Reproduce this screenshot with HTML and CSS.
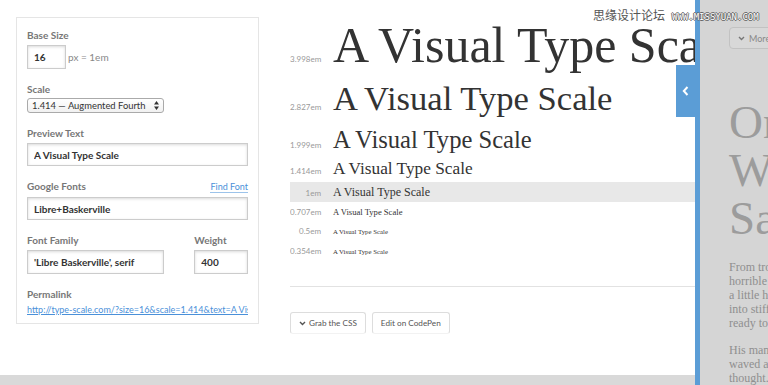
FILE: index.html
```html
<!DOCTYPE html>
<html lang="en">
<head>
    <meta charset="UTF-8">
    <meta name="viewport" content="width=device-width, initial-scale=1.0">
    <title>Type Scale</title>
    <link rel="stylesheet" href="styles.css">
</head>
<body>
    <div class="watermark">思缘设计论坛<span>WWW.MISSYUAN.COM</span></div>

    <div class="layout">
        <div class="page">
            <div class="content">
                <!-- Controls -->
                <aside class="controls">
                    <div class="field">
                        <label>Base Size</label>
                        <div class="inline">
                            <input class="input input-size" type="text" value="16">
                            <span class="unit">px = 1em</span>
                        </div>
                    </div>

                    <div class="field field-select">
                        <label>Scale</label>
                        <div class="select-wrap">
                            <select class="select">
                                <option>1.414 — Augmented Fourth</option>
                            </select>
                            <svg class="select-arrows" width="5" height="9" viewBox="0 0 5 9"><path d="M2.5 0L5 3.5H0z M2.5 9L0 5.5h5z" fill="#333"/></svg>
                        </div>
                    </div>

                    <div class="field">
                        <label>Preview Text</label>
                        <input class="input input-short" type="text" value="A Visual Type Scale">
                    </div>

                    <div class="field">
                        <label>Google Fonts <a class="find-font" href="#">Find Font</a></label>
                        <input class="input input-short" type="text" value="Libre+Baskerville">
                    </div>

                    <div class="field-row">
                        <div class="field family">
                            <label>Font Family</label>
                            <input class="input" type="text" value="'Libre Baskerville', serif">
                        </div>
                        <div class="field weight">
                            <label>Weight</label>
                            <input class="input" type="text" value="400">
                        </div>
                    </div>

                    <div class="field permalink">
                        <label>Permalink</label>
                        <a href="#">http://type-scale.com/?size=16&amp;scale=1.414&amp;text=A Visual Type Scale&amp;font=Libre+Baskerville</a>
                    </div>
                </aside>

                <!-- Scale preview -->
                <main class="scale">
                    <div class="row row-1"><span class="size">3.998em</span><span class="sample">A Visual Type Scale</span></div>
                    <div class="row row-2"><span class="size">2.827em</span><span class="sample">A Visual Type Scale</span></div>
                    <div class="row row-3"><span class="size">1.999em</span><span class="sample">A Visual Type Scale</span></div>
                    <div class="row row-4"><span class="size">1.414em</span><span class="sample">A Visual Type Scale</span></div>
                    <div class="row row-5 base"><span class="size">1em</span><span class="sample">A Visual Type Scale</span></div>
                    <div class="row row-6"><span class="size">0.707em</span><span class="sample">A Visual Type Scale</span></div>
                    <div class="row row-7"><span class="size">0.5em</span><span class="sample">A Visual Type Scale</span></div>
                    <div class="row row-8"><span class="size">0.354em</span><span class="sample">A Visual Type Scale</span></div>

                    <hr>

                    <div class="actions">
                        <button class="btn">
                            <svg width="7" height="5" viewBox="0 0 7 5"><path d="M1 1l2.5 2.5L6 1" fill="none" stroke="#555" stroke-width="1.4"/></svg>
                            Grab the CSS
                        </button>
                        <button class="btn">Edit on CodePen</button>
                    </div>
                </main>
            </div>
            <div class="band"></div>
        </div>

        <!-- Drawer -->
        <div class="drawer">
            <div class="drawer-tab">
                <svg width="7" height="10" viewBox="0 0 7 10"><path d="M5.5 1L1.8 5l3.7 4" fill="none" stroke="#fff" stroke-width="2"/></svg>
            </div>
            <div class="drawer-body">
                <button class="more">
                    <svg width="7" height="5" viewBox="0 0 7 5"><path d="M1 1l2.5 2.5L6 1" fill="none" stroke="#777" stroke-width="1.4"/></svg>
                    More
                </button>
                <h2>One Morning,<br>When Gregor<br>Samsa Woke</h2>
                <p>From troubled dreams, he found himself transformed in his bed into a<br>horrible vermin. He lay on his armour-like back, and if he lifted his head<br>a little he could see his brown belly, slightly domed and divided by arches<br>into stiff sections. The bedding was hardly able to cover it and seemed<br>ready to slide off any moment.</p>
                <p>His many legs, pitifully thin compared with the size of the rest of him,<br>waved about helplessly as he looked. "What's happened to me?" he<br>thought.</p>
            </div>
        </div>
    </div>
</body>
</html>
```

FILE: styles.css
```css
/* Global */
body {
    margin: 0;
    font-family: Lato, "Liberation Sans", sans-serif;
    background-color: #fff;
    color: #333;
    overflow: hidden;
}

.layout {
    display: flex;
    height: 385px;
}

/* Watermark */
.watermark {
    position: absolute;
    top: 6px;
    left: 593px;
    z-index: 10;
    font-family: "Noto Sans CJK SC", sans-serif;
    font-size: 12px;
    line-height: 18px;
    color: #555;
}

.watermark span {
    margin-left: 7px;
    font-family: "DejaVu Sans Mono", monospace;
    font-size: 9px;
    color: #fff;
    text-shadow: 1px 0 0 #666, -1px 0 0 #666, 0 1px 0 #666, 0 -1px 0 #666;
}

/* Page */
.page {
    flex: none;
    width: 695px;
    display: flex;
    flex-direction: column;
    overflow: hidden;
}

.content {
    flex: 1;
    display: flex;
    gap: 31px;
    padding: 17px 0 0 16px;
}

.band {
    height: 10px;
    background-color: #d9d9d9;
}

/* Controls card */
.controls {
    box-sizing: border-box;
    flex: none;
    width: 243px;
    height: 307px;
    padding: 11px 10px 0;
    border: 1px solid #e5e5e5;
}

.field {
    margin-bottom: 14px;
}

.field label {
    display: flex;
    justify-content: space-between;
    align-items: baseline;
    margin-bottom: 4px;
    font-size: 10px;
    font-weight: 700;
    line-height: 12px;
    color: #777;
}

.field-select label {
    margin-bottom: 3px;
}

.find-font {
    font-size: 9px;
    font-weight: 400;
    color: #4a90d9;
    text-decoration: none;
    border-bottom: 1px solid #9cc3ea;
    line-height: 10px;
}

.inline {
    display: flex;
    align-items: center;
    gap: 2px;
}

.unit {
    font-size: 10px;
    color: #888;
}

.input {
    box-sizing: border-box;
    display: block;
    width: 100%;
    height: 24px;
    padding: 0 6px;
    border: 1px solid #ccc;
    box-shadow: inset 0 1px 3px rgba(0, 0, 0, 0.15);
    font-family: Lato, sans-serif;
    font-size: 10px;
    font-weight: 700;
    color: #333;
    outline: none;
}

.input-short {
    height: 23px;
}

.input-size {
    width: 39px;
}

.select-wrap {
    position: relative;
    width: 137px;
}

.select {
    appearance: none;
    -webkit-appearance: none;
    box-sizing: border-box;
    display: block;
    width: 137px;
    height: 15px;
    padding: 0 4px;
    border: 1px solid #aaa;
    border-radius: 3px;
    background: linear-gradient(#fff, #f1f1f1);
    font-family: Lato, sans-serif;
    font-size: 9.4px;
    line-height: 13px;
    color: #333;
}

.select-arrows {
    position: absolute;
    right: 5px;
    top: 3px;
}

.field-row {
    display: flex;
    gap: 30px;
}

.family {
    width: 138px;
}

.weight {
    width: 54px;
}

.permalink a {
    display: block;
    overflow: hidden;
    white-space: nowrap;
    font-size: 9px;
    line-height: 12px;
    color: #4a90d9;
}

/* Scale preview */
.scale {
    flex: none;
    width: 405px;
}

.row {
    display: flex;
    align-items: baseline;
    overflow: hidden;
    white-space: nowrap;
}

.size {
    flex: none;
    width: 31px;
    margin-right: 12px;
    text-align: right;
    font-size: 8px;
    color: #999;
}

.sample {
    font-family: "Liberation Serif", serif;
    color: #333;
}

.row-1 { height: 64px; }
.row-1 .sample { font-size: 50px; line-height: 56px; }
.row-2 { height: 43px; }
.row-2 .sample { font-size: 34.6px; line-height: 35px; }
.row-3 { height: 32px; }
.row-3 .sample { font-size: 24.6px; line-height: 32px; }
.row-4 { height: 26px; }
.row-4 .sample { font-size: 17.3px; line-height: 26px; }
.row-5 { height: 20px; }
.row-5 .sample { font-size: 12px; line-height: 20px; }
.row-6 { height: 20px; }
.row-6 .sample { font-size: 8.6px; line-height: 20px; }
.row-7 { height: 20px; }
.row-7 .sample { font-size: 6.8px; line-height: 20px; }
.row-8 { height: 20px; }
.row-8 .sample { font-size: 6.8px; line-height: 20px; }

.base {
    background-color: #e8e8e8;
}

.scale hr {
    margin: 24px 0 0;
    border: 0;
    border-top: 1px solid #e2e2e2;
}

.actions {
    display: flex;
    gap: 6px;
    margin-top: 25px;
}

.btn {
    display: flex;
    align-items: center;
    gap: 3px;
    height: 22px;
    padding: 0 8px;
    border: 1px solid #ddd;
    border-bottom-color: #f2f2f2;
    border-radius: 3px;
    background-color: #fff;
    font-family: Lato, sans-serif;
    font-size: 8.2px;
    color: #555;
}

/* Drawer */
.drawer {
    position: relative;
    flex: 1;
    min-width: 0;
    border-left: 5px solid #5b9dd6;
    background-color: #d5d5d5;
}

.drawer-body {
    height: 100%;
    box-sizing: border-box;
    padding: 27px 0 0 29px;
    overflow: hidden;
    white-space: nowrap;
}

.drawer-tab {
    position: absolute;
    left: -24px;
    top: 65px;
    width: 19px;
    height: 52px;
    display: flex;
    align-items: center;
    justify-content: center;
    background-color: #5b9dd6;
}

.more {
    display: flex;
    align-items: center;
    gap: 4px;
    height: 22px;
    padding: 0 8px;
    border: 1px solid #c2c2c2;
    border-radius: 4px;
    background-color: #d8d8d8;
    font-family: Lato, sans-serif;
    font-size: 9px;
    color: #888;
}

.drawer h2 {
    margin: 49px 0 0;
    font-family: "Liberation Serif", serif;
    font-size: 47px;
    font-weight: 400;
    line-height: 48px;
    color: #9c9c9c;
}

.drawer p {
    margin: 18px 0 0;
    font-family: "Liberation Serif", serif;
    font-size: 12px;
    line-height: 14px;
    color: #8f8f8f;
}

.drawer p + p {
    margin-top: 13px;
}
```
